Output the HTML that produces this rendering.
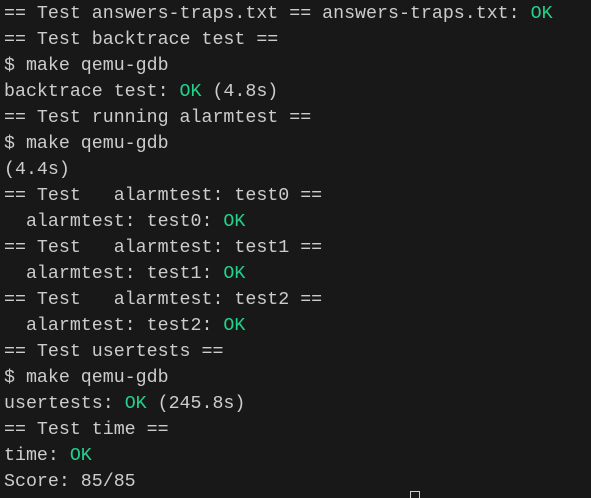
<!DOCTYPE html>
<html><head><style>
html,body{margin:0;padding:0;background:#181818;width:591px;height:495px;overflow:hidden}
pre{margin:0;padding:1px 0 0 4px;font-family:"Liberation Mono",monospace;font-size:18.3px;line-height:26px;color:#cccccc}
.g{color:#23d18b}
.c{position:absolute;left:410px;top:491px;width:8px;height:6px;border:1px solid #ccc;border-bottom:none}
</style></head><body>
<pre>== Test answers-traps.txt == answers-traps.txt: <span class="g">OK</span>
== Test backtrace test ==
$ make qemu-gdb
backtrace test: <span class="g">OK</span> (4.8s)
== Test running alarmtest ==
$ make qemu-gdb
(4.4s)
== Test   alarmtest: test0 ==
  alarmtest: test0: <span class="g">OK</span>
== Test   alarmtest: test1 ==
  alarmtest: test1: <span class="g">OK</span>
== Test   alarmtest: test2 ==
  alarmtest: test2: <span class="g">OK</span>
== Test usertests ==
$ make qemu-gdb
usertests: <span class="g">OK</span> (245.8s)
== Test time ==
time: <span class="g">OK</span>
Score: 85/85</pre>
<div class="c"></div>
</body></html>
